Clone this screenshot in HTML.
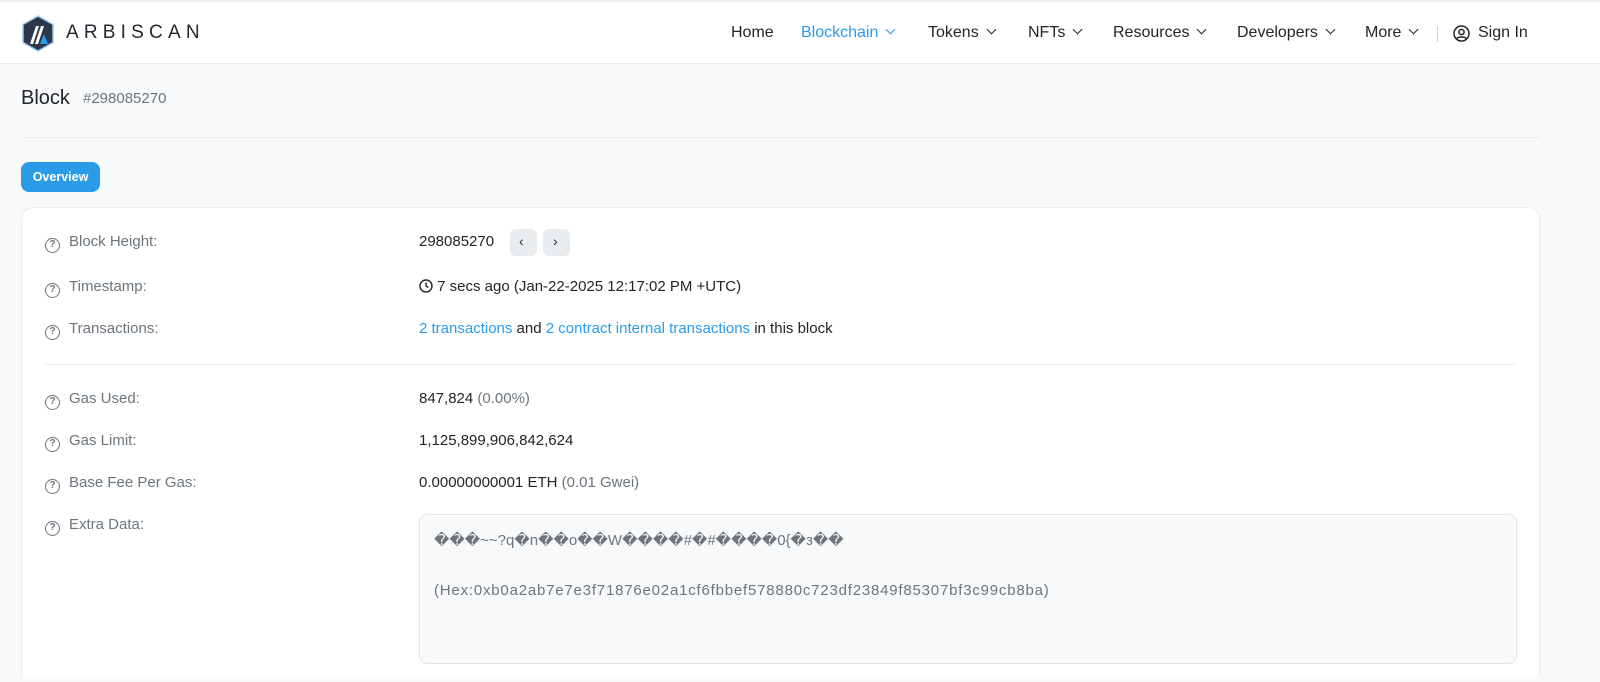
<!DOCTYPE html>
<html style="width:1600px;height:682px;overflow:hidden"><head><meta charset="utf-8"><style>
*{box-sizing:border-box;margin:0;padding:0}
body{width:1600px;height:682px;overflow:hidden;background:#f8f9fa;font-family:"Liberation Sans",sans-serif;color:#212529;font-size:15px;position:relative}
.hdr{position:absolute;left:0;top:0;width:1600px;height:64px;background:#fff;border-top:2px solid #eef0f2;border-bottom:1px solid #e9ecef}
.nav{position:absolute;top:22px;font-size:16px;color:#212529;white-space:nowrap}
.chev{display:inline-block;width:7px;height:7px;border-right:1.5px solid currentColor;border-bottom:1.5px solid currentColor;transform:rotate(45deg);margin-left:9px;position:relative;top:-4px}
.a{position:absolute;white-space:nowrap}
.lbl{color:#6c757d;font-size:15px}
.q{display:inline-block;width:15px;height:15px;border:1.4px solid #6c757d;border-radius:50%;font-size:10px;text-align:center;line-height:12px;font-weight:bold;color:#6c757d;margin-right:9px;vertical-align:-1px}
.link{color:#2b9be8}
.card{position:absolute;left:21px;top:207px;width:1519px;height:470px;background:#fff;border:1px solid #e9ecef;border-bottom:none;border-radius:12px 12px 0 0}
.btn{display:inline-block;width:27px;height:27px;background:#e9ecef;border-radius:6px;position:absolute}
</style></head><body>
<div class="hdr">
<svg style="position:absolute;left:21px;top:13px" width="34" height="37" viewBox="0 0 34 37"><path d="M17 1 L32 9.5 V27.5 L17 36 L2 27.5 V9.5 Z" fill="#2d374b" stroke="#9dcced" stroke-width="1.5"/><path d="M9 29 L15 11 H18 L12 29 Z" fill="#fff"/><path d="M14 29 L20 11 H23 L17 29 Z" fill="#fff"/><path d="M19 29 L23 19 L27 29 Z" fill="#28a0f0"/></svg>
<div class="a" style="left:66px;top:20px;font-size:19px;letter-spacing:5.2px;color:#23272e">ARBISCAN</div>
<div class="nav" style="left:731px">Home</div>
<div class="nav" style="left:801px;color:#2b9be8">Blockchain<span class="chev"></span></div>
<div class="nav" style="left:928px">Tokens<span class="chev"></span></div>
<div class="nav" style="left:1028px">NFTs<span class="chev"></span></div>
<div class="nav" style="left:1113px">Resources<span class="chev"></span></div>
<div class="nav" style="left:1237px">Developers<span class="chev"></span></div>
<div class="nav" style="left:1365px">More<span class="chev"></span></div>
<div class="a" style="left:1437px;top:24px;width:1px;height:16px;background:#ced4da"></div>
<svg style="position:absolute;left:1453px;top:23px" width="17" height="17" viewBox="0 0 17 17" fill="none" stroke="#212529" stroke-width="1.5"><circle cx="8.5" cy="8.5" r="7.5"/><circle cx="8.5" cy="7" r="2.6"/><path d="M3.8 13.6 C5 11.5 12 11.5 13.2 13.6"/></svg>
<div class="nav" style="left:1478px">Sign In</div>
</div>
<div class="a" style="left:21px;top:87px;font-size:20px;color:#212529">Block</div>
<div class="a" style="left:83px;top:90px;font-size:15px;color:#6c757d">#298085270</div>
<div class="a" style="left:21px;top:137px;width:1519px;height:1px;background:#e9ecef"></div>
<div class="a" style="left:21px;top:162px;width:79px;height:30px;background:#2b9be8;border-radius:8px;color:#fff;font-size:12.5px;font-weight:bold;text-align:center;line-height:30px">Overview</div>
<div class="card"></div>
<div class="a lbl" style="left:45px;top:233px"><span class="q">?</span>Block Height:</div>
<div class="a" style="left:419px;top:233px">298085270</div>
<div class="btn" style="left:510px;top:229px"></div><div class="a" style="left:519px;top:233px;font-size:14px">&lsaquo;</div>
<div class="btn" style="left:543px;top:229px"></div><div class="a" style="left:553px;top:233px;font-size:14px">&rsaquo;</div>
<div class="a lbl" style="left:45px;top:278px"><span class="q">?</span>Timestamp:</div>
<div class="a" style="left:419px;top:278px"><svg width="14" height="14" viewBox="0 0 14 14" style="vertical-align:-2px" fill="none" stroke="#212529" stroke-width="1.4"><circle cx="7" cy="7" r="6"/><path d="M7 3.5V7L9.3 8.6"/></svg> 7 secs ago (Jan-22-2025 12:17:02 PM +UTC)</div>
<div class="a lbl" style="left:45px;top:320px"><span class="q">?</span>Transactions:</div>
<div class="a" style="left:419px;top:320px"><span class="link">2 transactions</span> and <span class="link">2 contract internal transactions</span> in this block</div>
<div class="a" style="left:45px;top:364px;width:1471px;height:1px;background:#e9ecef"></div>
<div class="a lbl" style="left:45px;top:390px"><span class="q">?</span>Gas Used:</div>
<div class="a" style="left:419px;top:390px">847,824 <span style="color:#6c757d">(0.00%)</span></div>
<div class="a lbl" style="left:45px;top:432px"><span class="q">?</span>Gas Limit:</div>
<div class="a" style="left:419px;top:432px">1,125,899,906,842,624</div>
<div class="a lbl" style="left:45px;top:474px"><span class="q">?</span>Base Fee Per Gas:</div>
<div class="a" style="left:419px;top:474px">0.00000000001 ETH <span style="color:#6c757d">(0.01 Gwei)</span></div>
<div class="a lbl" style="left:45px;top:516px"><span class="q">?</span>Extra Data:</div>
<div class="a" style="left:419px;top:514px;width:1098px;height:150px;background:#f8f9fa;border:1px solid #e2e5e8;border-radius:8px"></div>
<div class="a" style="left:434px;top:531px;color:#6c757d;font-size:15px">&#xFFFD;&#xFFFD;&#xFFFD;~~?q&#xFFFD;n&#xFFFD;&#xFFFD;o&#xFFFD;&#xFFFD;W&#xFFFD;&#xFFFD;&#xFFFD;&#xFFFD;#&#xFFFD;#&#xFFFD;&#xFFFD;&#xFFFD;&#xFFFD;0{&#xFFFD;з&#xFFFD;&#xFFFD;</div>
<div class="a" style="left:434px;top:582px;color:#6c757d;font-size:15px;letter-spacing:0.8px">(Hex:0xb0a2ab7e7e3f71876e02a1cf6fbbef578880c723df23849f85307bf3c99cb8ba)</div>
</body></html>
